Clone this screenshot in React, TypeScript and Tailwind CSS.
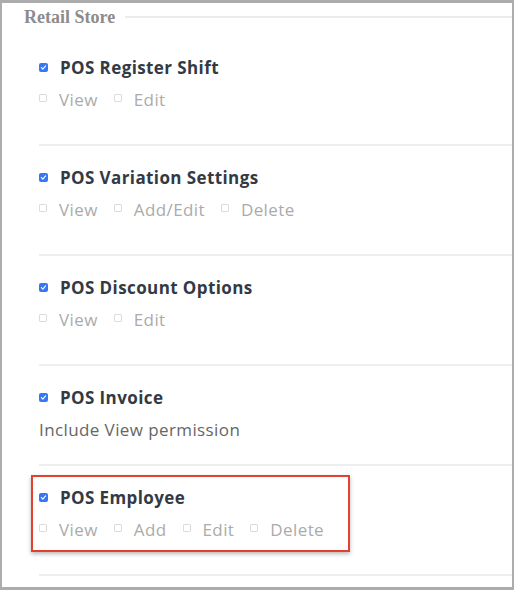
import React from 'react';

type Perm = {
  title: string;
  options?: string[];
  note?: string;
  highlight?: boolean;
};

const perms: Perm[] = [
  { title: 'POS Register Shift', options: ['View', 'Edit'] },
  { title: 'POS Variation Settings', options: ['View', 'Add/Edit', 'Delete'] },
  { title: 'POS Discount Options', options: ['View', 'Edit'] },
  { title: 'POS Invoice', note: 'Include View permission' },
  { title: 'POS Employee', options: ['View', 'Add', 'Edit', 'Delete'], highlight: true },
];

function CheckedBox() {
  return (
    <span className="flex h-[9px] w-[9px] shrink-0 items-center justify-center rounded-[2px] bg-[#3478f6]">
      <svg viewBox="0 0 10 10" className="h-[7px] w-[7px]" fill="none">
        <path d="M2 5.2 L4.1 7.2 L8 2.8" stroke="white" strokeWidth="1.6" strokeLinecap="round" strokeLinejoin="round" />
      </svg>
    </span>
  );
}

function EmptyBox() {
  return <span className="block h-[8px] w-[8px] shrink-0 rounded-[1px] border border-[#dcdcdc] bg-white" />;
}

export default function App() {
  return (
    <div className="h-[590px] w-[514px] border-t-[3px] border-r-2 border-b-[3px] border-l-2 border-[#acacac] bg-white font-['Open_Sans',sans-serif]">
      <div className="flex h-[33px] items-start pl-[22px] pt-[3px]">
        <span className="font-['Liberation_Serif',serif] text-[18px] font-bold leading-[22px] text-[#8c8c8c]">Retail Store</span>
        <div className="mt-[10px] ml-[10px] h-[2px] flex-1 bg-[#ebebeb]" />
      </div>

      <div className="ml-[37px]">
        {perms.map(p => (
          <div
            key={p.title}
            className={`relative border-b-2 border-[#eeeeee] pt-[20px] ${p.note ? 'pb-[22px]' : 'pb-[32px]'}`}
          >
            {p.highlight && (
              <div className="pointer-events-none absolute top-[9px] left-[-8px] h-[77px] w-[319px] border-2 border-[#e2412f] shadow-[0_2px_4px_rgba(0,0,0,0.28)]" />
            )}
            <div className="flex h-[24px] items-center">
              <span className="mt-[-2px]">
                <CheckedBox />
              </span>
              <span className="ml-[12px] text-[17px] font-bold leading-[24px] tracking-[0.4px] text-[#333a44]">{p.title}</span>
            </div>
            {p.options && (
              <div className="mt-[8px] flex h-[24px] items-center gap-[16px]">
                {p.options.map(o => (
                  <div key={o} className="flex items-center">
                    <span className="mt-[-5px]">
                      <EmptyBox />
                    </span>
                    <span className="ml-[12px] text-[17px] leading-[24px] tracking-[0.4px] text-[#ababab]">{o}</span>
                  </div>
                ))}
              </div>
            )}
            {p.note && (
              <div className="mt-[8px] h-[24px] text-[17px] leading-[24px] tracking-[0.4px] text-[#666666]">{p.note}</div>
            )}
          </div>
        ))}
      </div>
    </div>
  );
}
